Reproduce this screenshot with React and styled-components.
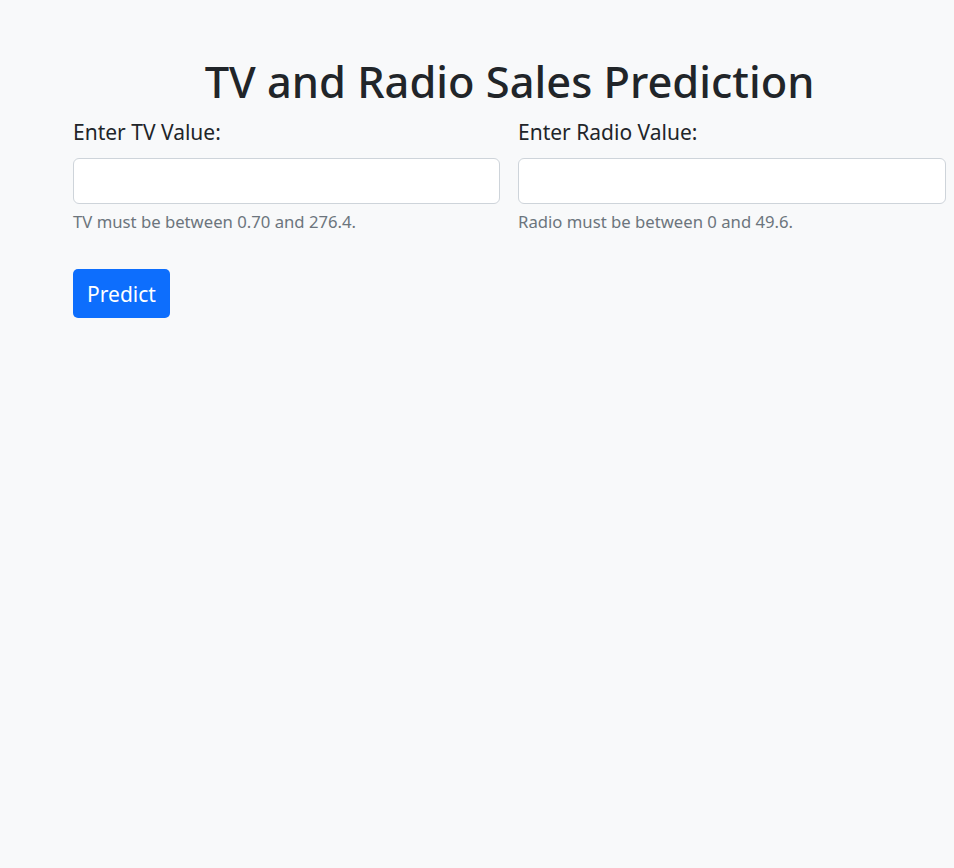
import React from "react";
import styled, { createGlobalStyle } from "styled-components";

const GlobalStyle = createGlobalStyle`
  * {
    box-sizing: border-box;
  }

  body {
    margin: 0;
    background: #f8f9fa;
    color: #212529;
    font-family: "Noto Sans", "Open Sans", sans-serif;
  }
`;

const Page = styled.main`
  padding: 56px 8px 40px 73px;
`;

const Title = styled.h1`
  margin: 0 0 9px;
  text-align: center;
  font-size: 43.4px;
  font-weight: 500;
  line-height: 1.2;
`;

const FieldRow = styled.div`
  display: grid;
  grid-template-columns: 427px 428px;
  column-gap: 18px;
`;

const Field = styled.div`
  display: flex;
  flex-direction: column;
`;

const Label = styled.label`
  font-size: 21px;
  line-height: 30px;
  margin-bottom: 11px;
`;

const Input = styled.input`
  height: 46px;
  padding: 8px 16px;
  font-size: 20px;
  font-family: inherit;
  background: #fff;
  border: 1px solid #ced4da;
  border-radius: 6px;
  outline: none;
`;

const Help = styled.small`
  margin-top: 6px;
  font-size: 16.7px;
  line-height: 24px;
  color: #6c757d;
`;

const Button = styled.button`
  margin-top: 35px;
  height: 49px;
  width: 97px;
  padding: 0;
  font-family: inherit;
  font-size: 21px;
  color: #fff;
  background: #0d6efd;
  border: none;
  border-radius: 5px;
  cursor: pointer;
`;

const App = () => {
  return (
    <>
      <GlobalStyle />
      <Page>
        <Title>TV and Radio Sales Prediction</Title>
        <FieldRow>
          <Field>
            <Label htmlFor="tv">Enter TV Value:</Label>
            <Input id="tv" type="text" />
            <Help>TV must be between 0.70 and 276.4.</Help>
          </Field>
          <Field>
            <Label htmlFor="radio">Enter Radio Value:</Label>
            <Input id="radio" type="text" />
            <Help>Radio must be between 0 and 49.6.</Help>
          </Field>
        </FieldRow>
        <Button>Predict</Button>
      </Page>
    </>
  );
};

export default App;
